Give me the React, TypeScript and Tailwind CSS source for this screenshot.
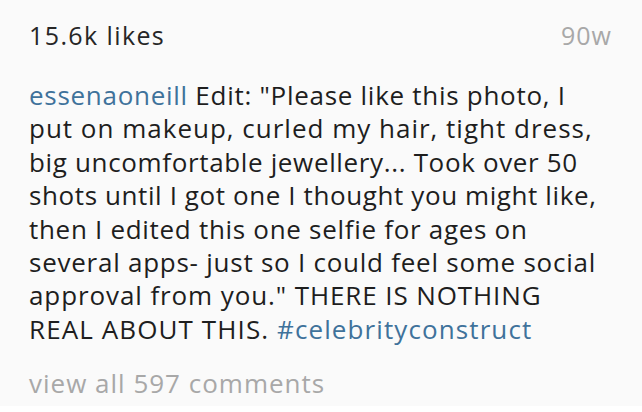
import React from "react";

const lines: { cls: string; node: React.ReactNode }[] = [
  {
    cls: "tracking-[0.72px]",
    node: (
      <>
        <span className="text-[#3f729b]">essenaoneill</span> Edit: "Please like this photo, I
      </>
    ),
  },
  { cls: "tracking-[1px]", node: <>put on makeup, curled my hair, tight dress,</> },
  { cls: "tracking-[0.65px]", node: <>big uncomfortable jewellery... Took over 50</> },
  { cls: "tracking-[0.6px]", node: <>shots until I got one I thought you might like,</> },
  { cls: "tracking-[0.7px]", node: <>then I edited this one selfie for ages on</> },
  { cls: "tracking-[0.75px]", node: <>several apps- just so I could feel some social</> },
  { cls: "tracking-[0.9px]", node: <>approval from you." THERE IS NOTHING</> },
  {
    cls: "tracking-[1.1px]",
    node: (
      <>
        REAL ABOUT THIS. <span className="text-[#3f729b]">#celebrityconstruct</span>
      </>
    ),
  },
];

export default function App() {
  return (
    <div
      className="w-[642px] h-[412px] bg-white flex flex-col"
      style={{ fontFamily: "'Open Sans', 'Noto Sans', sans-serif" }}
    >
      <div className="h-[406px] bg-[#fafafa] pl-[29px] pr-[30px] pt-[19px] flex flex-col">
        <div className="flex justify-between items-center h-[34px] text-[25px]">
          <span className="text-[#262626] tracking-[1.4px]">15.6k likes</span>
          <span className="text-[#a8a8a8] tracking-[1px]">90w</span>
        </div>
        <div className="mt-[26px] text-[26px] leading-[33.4px] text-[#1e1e1e]">
          {lines.map((l, i) => (
            <div key={i} className={`whitespace-nowrap ${l.cls}`}>
              {l.node}
            </div>
          ))}
        </div>
        <div className="mt-[20px] h-[34px] flex items-center text-[26px] tracking-[1px] text-[#a8a8a8]">
          view all 597 comments
        </div>
      </div>
    </div>
  );
}
